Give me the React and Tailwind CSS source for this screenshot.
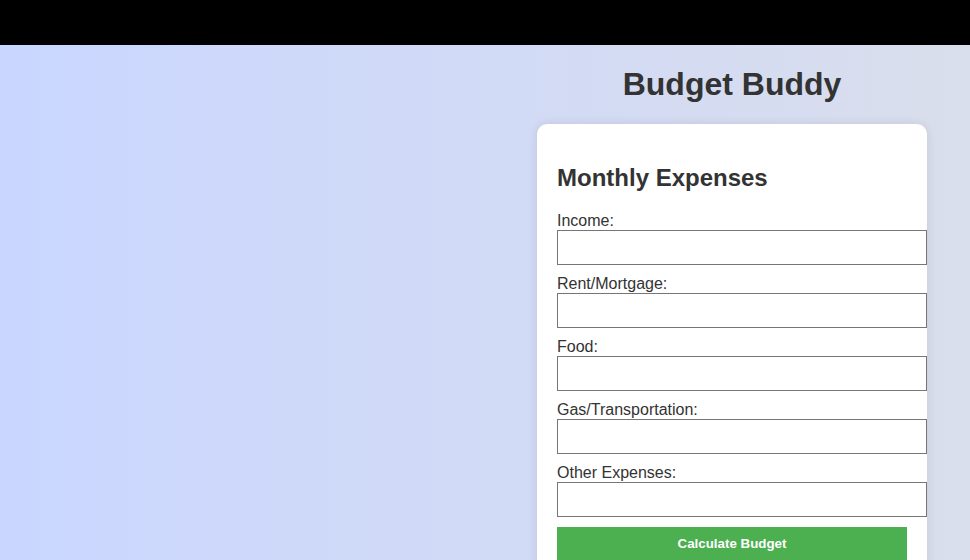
const fields = ['Income:', 'Rent/Mortgage:', 'Food:', 'Gas/Transportation:', 'Other Expenses:']

export default function App() {
  return (
    <div className="w-[970px] h-[560px] overflow-hidden font-['Liberation_Sans',Arial,sans-serif] text-[#333]">
      <div className="w-[1464px] min-h-[560px] bg-linear-to-r from-[#c9d6ff] to-[#e2e2e2]">
        {/* Top bar */}
        <div className="h-[45px] bg-black" />

        <div className="flex flex-col items-center">
          <h1 className="mt-[20.5px] mb-[21.5px] text-[32px] leading-[37px] font-bold">Budget Buddy</h1>

          {/* Card */}
          <div className="w-[390px] bg-white rounded-[10px] shadow-[0_0_10px_rgba(0,0,0,0.1)] p-5 pb-10">
            <h2 className="mt-5 mb-5 text-[24px] leading-[28px] font-bold">Monthly Expenses</h2>
            {fields.map(label => (
              <div key={label}>
                <label className="block text-[16px] leading-[18px]">{label}</label>
                <input
                  type="text"
                  className="block w-[370px] h-[35px] mb-[10px] border border-[#767676] bg-white px-2 text-[16px] outline-none"
                />
              </div>
            ))}
            <button className="w-[350px] h-[34px] bg-[#4caf50] text-white text-[13.33px] font-bold">
              Calculate Budget
            </button>
          </div>
        </div>
      </div>
    </div>
  )
}
